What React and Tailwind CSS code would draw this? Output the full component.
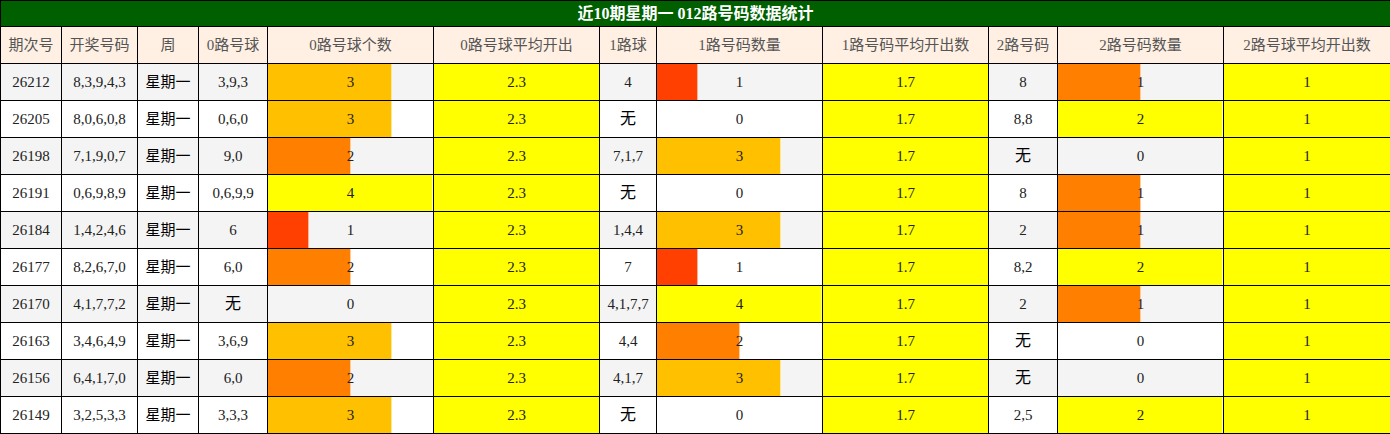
const rows = [
  ['26212', '8,3,9,4,3', '3,9,3', 3, '4', 1, '8', 1],
  ['26205', '8,0,6,0,8', '0,6,0', 3, '无', 0, '8,8', 2],
  ['26198', '7,1,9,0,7', '9,0', 2, '7,1,7', 3, '无', 0],
  ['26191', '0,6,9,8,9', '0,6,9,9', 4, '无', 0, '8', 1],
  ['26184', '1,4,2,4,6', '6', 1, '1,4,4', 3, '2', 1],
  ['26177', '8,2,6,7,0', '6,0', 2, '7', 1, '8,2', 2],
  ['26170', '4,1,7,7,2', '无', 0, '4,1,7,7', 4, '2', 1],
  ['26163', '3,4,6,4,9', '3,6,9', 3, '4,4', 2, '无', 0],
  ['26156', '6,4,1,7,0', '6,0', 2, '4,1,7', 3, '无', 0],
  ['26149', '3,2,5,3,3', '3,3,3', 3, '无', 0, '2,5', 2],
];

const headers = [
  '期次号',
  '开奖号码',
  '周',
  '0路号球',
  '0路号球个数',
  '0路号球平均开出',
  '1路球',
  '1路号码数量',
  '1路号码平均开出数',
  '2路号码',
  '2路号码数量',
  '2路号球平均开出数',
];

const colWidths = ['w-[61px]', 'w-[76px]', 'w-[61px]', 'w-[69px]', 'w-[166px]', 'w-[166px]', 'w-[57px]', 'w-[166px]', 'w-[166px]', 'w-[69px]', 'w-[166px]', 'w-[167px]'];

const barColor = (ratio) => {
  if (ratio >= 1) return '#ffff00';
  if (ratio >= 0.75) return '#ffc000';
  if (ratio >= 0.5) return '#ff8000';
  return '#ff4000';
};

const cell = 'border border-black text-center p-0 h-[37px]';

const BarCell = ({ value, max }) => {
  const ratio = value / max;
  return (
    <td className={cell}>
      <div className="relative h-[36px] flex items-center justify-center">
        {value > 0 && (
          <div
            className="absolute left-0 top-0 bottom-0 border-r border-white/60"
            style={{ width: `${ratio * 100}%`, backgroundColor: barColor(ratio) }}
          />
        )}
        <span className="relative">{value}</span>
      </div>
    </td>
  );
};

const Txt = ({ v }) =>
  v === '无' ? <span className="text-[16px] text-black">无</span> : <span>{v}</span>;

export default function App() {
  return (
    <div className="w-[1390px] h-[434px] bg-white overflow-hidden">
      <table
        className="table-fixed border-collapse w-[1390px] text-[15px] text-[#222]"
        style={{ fontFamily: '"Liberation Serif", "Noto Sans CJK SC", serif' }}
      >
        <colgroup>
          {colWidths.map((w, i) => (
            <col key={i} className={w} />
          ))}
        </colgroup>
        <thead>
          <tr>
            <th colSpan={12} className="border border-black bg-[#006000] text-white font-bold text-[16px] h-[26px] p-0">
              近10期星期一 012路号码数据统计
            </th>
          </tr>
          <tr className="bg-[#fff0e3]">
            {headers.map((h) => (
              <th key={h} className={`${cell} font-normal text-[15px] text-[#555] whitespace-nowrap`}>
                {h}
              </th>
            ))}
          </tr>
        </thead>
        <tbody>
          {rows.map((r, i) => (
            <tr key={r[0]} className={i % 2 === 0 ? 'bg-[#f4f4f4]' : 'bg-white'}>
              <td className={cell}>{r[0]}</td>
              <td className={cell}>{r[1]}</td>
              <td className={`${cell} text-[15px] text-black`}>星期一</td>
              <td className={cell}><Txt v={r[2]} /></td>
              <BarCell value={r[3]} max={4} />
              <td className={`${cell} bg-[#ffff00]`}>2.3</td>
              <td className={cell}><Txt v={r[4]} /></td>
              <BarCell value={r[5]} max={4} />
              <td className={`${cell} bg-[#ffff00]`}>1.7</td>
              <td className={cell}><Txt v={r[6]} /></td>
              <BarCell value={r[7]} max={2} />
              <td className={`${cell} bg-[#ffff00]`}>1</td>
            </tr>
          ))}
        </tbody>
      </table>
    </div>
  );
}
